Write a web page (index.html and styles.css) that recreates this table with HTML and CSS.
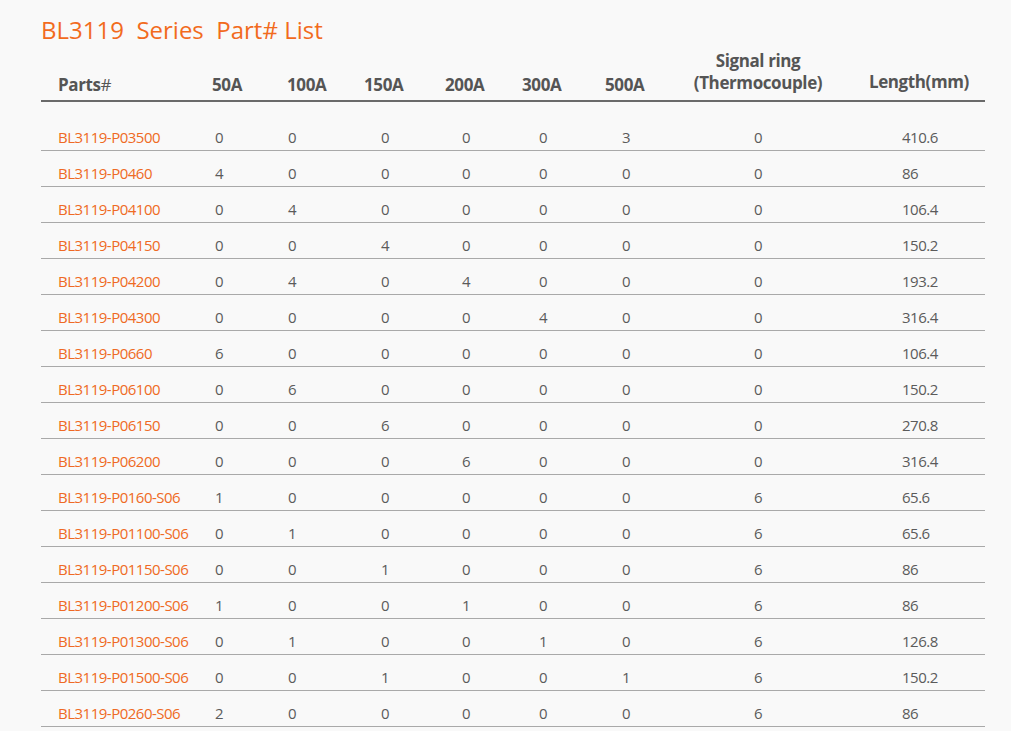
FILE: index.html
```html
<!DOCTYPE html>
<html lang="en">
<head>
<meta charset="utf-8">
<title>BL3119 Series Part# List</title>
<link rel="stylesheet" href="styles.css">
</head>
<body>
<div class="page">
  <h1 class="title">BL3119&nbsp; Series&nbsp; Part# List</h1>
  <table class="parts">
    <colgroup>
      <col class="c-part"><col class="c-50"><col class="c-100"><col class="c-150"><col class="c-200"><col class="c-300"><col class="c-500"><col class="c-sig"><col class="c-len">
    </colgroup>
    <thead>
      <tr>
        <th class="h-part">Parts<span class="hash">#</span></th>
        <th class="h-amp">50A</th>
        <th class="h-amp">100A</th>
        <th class="h-amp">150A</th>
        <th class="h-amp">200A</th>
        <th class="h-amp">300A</th>
        <th class="h-amp">500A</th>
        <th class="h-sig">Signal ring<br>(Thermocouple)</th>
        <th class="h-len">Length(mm)</th>
      </tr>
    </thead>
    <tbody>
      <tr><td class="pn">BL3119-P03500</td><td class="v50">0</td><td class="v100">0</td><td class="vc">0</td><td class="vc">0</td><td class="vc">0</td><td class="vc">3</td><td class="vsig">0</td><td class="vlen">410.6</td></tr>
      <tr><td class="pn">BL3119-P0460</td><td class="v50">4</td><td class="v100">0</td><td class="vc">0</td><td class="vc">0</td><td class="vc">0</td><td class="vc">0</td><td class="vsig">0</td><td class="vlen">86</td></tr>
      <tr><td class="pn">BL3119-P04100</td><td class="v50">0</td><td class="v100">4</td><td class="vc">0</td><td class="vc">0</td><td class="vc">0</td><td class="vc">0</td><td class="vsig">0</td><td class="vlen">106.4</td></tr>
      <tr><td class="pn">BL3119-P04150</td><td class="v50">0</td><td class="v100">0</td><td class="vc">4</td><td class="vc">0</td><td class="vc">0</td><td class="vc">0</td><td class="vsig">0</td><td class="vlen">150.2</td></tr>
      <tr><td class="pn">BL3119-P04200</td><td class="v50">0</td><td class="v100">4</td><td class="vc">0</td><td class="vc">4</td><td class="vc">0</td><td class="vc">0</td><td class="vsig">0</td><td class="vlen">193.2</td></tr>
      <tr><td class="pn">BL3119-P04300</td><td class="v50">0</td><td class="v100">0</td><td class="vc">0</td><td class="vc">0</td><td class="vc">4</td><td class="vc">0</td><td class="vsig">0</td><td class="vlen">316.4</td></tr>
      <tr><td class="pn">BL3119-P0660</td><td class="v50">6</td><td class="v100">0</td><td class="vc">0</td><td class="vc">0</td><td class="vc">0</td><td class="vc">0</td><td class="vsig">0</td><td class="vlen">106.4</td></tr>
      <tr><td class="pn">BL3119-P06100</td><td class="v50">0</td><td class="v100">6</td><td class="vc">0</td><td class="vc">0</td><td class="vc">0</td><td class="vc">0</td><td class="vsig">0</td><td class="vlen">150.2</td></tr>
      <tr><td class="pn">BL3119-P06150</td><td class="v50">0</td><td class="v100">0</td><td class="vc">6</td><td class="vc">0</td><td class="vc">0</td><td class="vc">0</td><td class="vsig">0</td><td class="vlen">270.8</td></tr>
      <tr><td class="pn">BL3119-P06200</td><td class="v50">0</td><td class="v100">0</td><td class="vc">0</td><td class="vc">6</td><td class="vc">0</td><td class="vc">0</td><td class="vsig">0</td><td class="vlen">316.4</td></tr>
      <tr><td class="pn">BL3119-P0160-S06</td><td class="v50">1</td><td class="v100">0</td><td class="vc">0</td><td class="vc">0</td><td class="vc">0</td><td class="vc">0</td><td class="vsig">6</td><td class="vlen">65.6</td></tr>
      <tr><td class="pn">BL3119-P01100-S06</td><td class="v50">0</td><td class="v100">1</td><td class="vc">0</td><td class="vc">0</td><td class="vc">0</td><td class="vc">0</td><td class="vsig">6</td><td class="vlen">65.6</td></tr>
      <tr><td class="pn">BL3119-P01150-S06</td><td class="v50">0</td><td class="v100">0</td><td class="vc">1</td><td class="vc">0</td><td class="vc">0</td><td class="vc">0</td><td class="vsig">6</td><td class="vlen">86</td></tr>
      <tr><td class="pn">BL3119-P01200-S06</td><td class="v50">1</td><td class="v100">0</td><td class="vc">0</td><td class="vc">1</td><td class="vc">0</td><td class="vc">0</td><td class="vsig">6</td><td class="vlen">86</td></tr>
      <tr><td class="pn">BL3119-P01300-S06</td><td class="v50">0</td><td class="v100">1</td><td class="vc">0</td><td class="vc">0</td><td class="vc">1</td><td class="vc">0</td><td class="vsig">6</td><td class="vlen">126.8</td></tr>
      <tr><td class="pn">BL3119-P01500-S06</td><td class="v50">0</td><td class="v100">0</td><td class="vc">1</td><td class="vc">0</td><td class="vc">0</td><td class="vc">1</td><td class="vsig">6</td><td class="vlen">150.2</td></tr>
      <tr><td class="pn">BL3119-P0260-S06</td><td class="v50">2</td><td class="v100">0</td><td class="vc">0</td><td class="vc">0</td><td class="vc">0</td><td class="vc">0</td><td class="vsig">6</td><td class="vlen">86</td></tr>
    </tbody>
  </table>
</div>
</body>
</html>
```

FILE: styles.css
```css
html, body {
  margin: 0;
  padding: 0;
  background: #f9f9f9;
}

body {
  font-family: "Open Sans", "Noto Sans", "DejaVu Sans", sans-serif;
  color: #575757;
}

.page {
  padding: 14px 26px 0 41px;
}

.title {
  margin: 0;
  font-size: 24px;
  line-height: 32px;
  font-weight: 400;
  color: #f26b1d;
}

.parts {
  width: 944px;
  border-collapse: collapse;
  table-layout: fixed;
}

.c-part { width: 164px; }
.c-50 { width: 75px; }
.c-100 { width: 77px; }
.c-150 { width: 81px; }
.c-200 { width: 77px; }
.c-300 { width: 83px; }
.c-500 { width: 82px; }
.c-sig { width: 160px; }
.c-len { width: 145px; }

.parts th {
  font-size: 17px;
  line-height: 20px;
  font-weight: 700;
  color: #555555;
  text-align: left;
  vertical-align: bottom;
  padding: 6px 0 5px 7px;
  border-bottom: 2px solid #6a6a6a;
  white-space: nowrap;
  letter-spacing: -0.4px;
}

.parts th.h-part {
  padding-left: 17px;
}

.hash {
  font-weight: 400;
}

.parts th.h-sig {
  text-align: center;
  line-height: 22px;
  padding-top: 4px;
  padding-left: 0;
  padding-right: 4px;
  padding-bottom: 6px;
}

.parts th.h-len {
  padding-left: 29px;
  padding-bottom: 8px;
}

.parts td {
  font-size: 15px;
  line-height: 20px;
  letter-spacing: -0.5px;
  color: #5b5b5b;
  padding: 12px 0 3px 24px;
  border-bottom: 1px solid #a9a9a9;
  white-space: nowrap;
}

.parts tbody tr:first-child td {
  padding-top: 25px;
}

.parts td.pn {
  color: #ef6a24;
  padding-left: 17px;
}

.parts td.v50 { padding-left: 10px; }
.parts td.v100 { padding-left: 8px; }
.parts td.vc { padding-left: 24px; }
.parts td.vsig { padding-left: 0; padding-right: 4px; text-align: center; }
.parts td.vlen { padding-left: 62px; }
```
